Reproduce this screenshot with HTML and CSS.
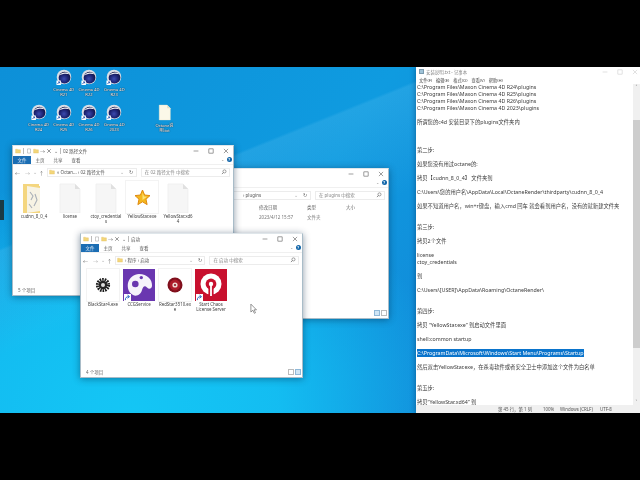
FILE: index.html
```html
<!DOCTYPE html>
<html lang="zh-CN">
<head>
<meta charset="utf-8">
<title>桌面</title>
<link rel="stylesheet" href="styles.css">
</head>
<body>
<svg class="defs" width="0" height="0" aria-hidden="true">
  <defs>
    <radialGradient id="c4dball" cx="45%" cy="60%" r="60%">
      <stop offset="0" stop-color="#3c4bb0"/><stop offset=".6" stop-color="#1c2270"/><stop offset="1" stop-color="#12143f"/>
    </radialGradient>
    <symbol id="c4d" viewBox="0 0 18 18">
      <circle cx="9" cy="9" r="8.2" fill="#d9dde6"/>
      <circle cx="9.6" cy="9.8" r="6.6" fill="url(#c4dball)"/>
      <path d="M3.5 7.5C6 3.5 12 2.5 15.5 6 12 4.8 7 5 3.5 7.5Z" fill="#f4f6fa"/>
      <rect x="0.5" y="13" width="5" height="5" fill="#fff"/>
      <path d="M1.5 17 L4 14.5M2.5 14.5H4V16" stroke="#2050b0" stroke-width="1" fill="none"/>
    </symbol>
    <symbol id="page" viewBox="0 0 32 32">
      <path d="M6 3H21L26 8V32H6Z" fill="#f6f6f6" stroke="#ececec" stroke-width=".7"/>
      <path d="M21 3V8H26Z" fill="#e0e0e0"/>
    </symbol>
    <symbol id="deskdoc" viewBox="0 0 32 32">
      <path d="M6 2H21L27 8V30H6Z" fill="#fbf8e8" stroke="#e8e4cc" stroke-width=".7"/>
      <path d="M21 2V8H27Z" fill="#e4e0c8"/>
    </symbol>
    <symbol id="folder-mini" viewBox="0 0 10 10">
      <path d="M1 2H4L5 3H9V8.5H1Z" fill="#f3d67a" stroke="#d9b14c" stroke-width=".5"/>
    </symbol>
    <symbol id="mini-page" viewBox="0 0 10 10">
      <path d="M2.5 1.5H7.5V8.5H2.5Z" fill="#fff" stroke="#888" stroke-width=".7"/>
    </symbol>
    <symbol id="mini-x" viewBox="0 0 10 10">
      <path d="M2 2L8 8M8 2L2 8" stroke="#555" stroke-width="1"/>
    </symbol>
    <symbol id="ctl-min" viewBox="0 0 10 10"><path d="M1 5H9" stroke="#333" stroke-width=".8"/></symbol>
    <symbol id="ctl-max" viewBox="0 0 10 10"><rect x="1.5" y="1.5" width="7" height="7" fill="none" stroke="#333" stroke-width=".8"/></symbol>
    <symbol id="ctl-close" viewBox="0 0 10 10"><path d="M1.5 1.5L8.5 8.5M8.5 1.5L1.5 8.5" stroke="#333" stroke-width=".8"/></symbol>
    <symbol id="search" viewBox="0 0 10 10">
      <circle cx="5.8" cy="4" r="2.6" fill="none" stroke="#555" stroke-width=".9"/><path d="M4 6L1.5 8.5" stroke="#555" stroke-width="1.1"/>
    </symbol>
    <symbol id="shortcut" viewBox="0 0 8 8">
      <rect width="8" height="8" fill="#fff"/><path d="M1.5 7C1.5 4 3 3 5.5 3M4 1.2L6.3 3L4 4.8" fill="none" stroke="#2060c0" stroke-width="1.1"/>
    </symbol>
  </defs>
</svg>

<main class="screen">
  <div class="edge-tab"></div>

  <div class="icon-grid">
    <a class="d-icon col-2"><svg class="d-glyph"><use href="#c4d"/></svg><span>Cinema 4D R21</span></a>
    <a class="d-icon"><svg class="d-glyph"><use href="#c4d"/></svg><span>Cinema 4D R22</span></a>
    <a class="d-icon"><svg class="d-glyph"><use href="#c4d"/></svg><span>Cinema 4D R23</span></a>
    <a class="d-icon col-1"><svg class="d-glyph"><use href="#c4d"/></svg><span>Cinema 4D R24</span></a>
    <a class="d-icon"><svg class="d-glyph"><use href="#c4d"/></svg><span>Cinema 4D R25</span></a>
    <a class="d-icon"><svg class="d-glyph"><use href="#c4d"/></svg><span>Cinema 4D R26</span></a>
    <a class="d-icon"><svg class="d-glyph"><use href="#c4d"/></svg><span>Cinema 4D 2023</span></a>
    <a class="d-icon col-6"><svg class="d-glyph doc"><use href="#deskdoc"/></svg><span>Octane说明.txt</span></a>
  </div>

  <!-- plugins window (back) -->
  <section class="win win-plugins">
    <header class="titlebar">
      <div class="qa"><svg class="mini"><use href="#folder-mini"/></svg></div>
      <div class="ctls"><svg class="ctl"><use href="#ctl-min"/></svg><svg class="ctl"><use href="#ctl-max"/></svg><svg class="ctl"><use href="#ctl-close"/></svg></div>
    </header>
    <nav class="ribbon"><span class="tab-file">文件</span><span class="grow"></span><span class="chev">⌄</span><span class="help">?</span></nav>
    <div class="addr">
      <span class="nav back">←</span><span class="nav dim">→</span><span class="nav dim">⌄</span><span class="nav">↑</span>
      <div class="path"><span class="grow">› plugins</span><span class="nav dim">⌄</span><span class="nav">↻</span></div>
      <div class="find"><span class="grow">在 plugins 中搜索</span><svg class="mini"><use href="#search"/></svg></div>
    </div>
    <div class="details">
      <div class="d-row d-head"><span class="c1">修改日期</span><span class="c2">类型</span><span class="c3">大小</span></div>
      <div class="d-row"><span class="c1">2023/4/12 15:57</span><span class="c2">文件夹</span></div>
    </div>
    <footer class="status"><span class="grow"></span><span class="view on"></span><span class="view"></span></footer>
  </section>

  <!-- 02 路径文件 window -->
  <section class="win win-path">
    <header class="titlebar">
      <div class="qa">
        <svg class="mini"><use href="#folder-mini"/></svg><i class="sep"></i>
        <svg class="mini"><use href="#mini-page"/></svg><svg class="mini"><use href="#folder-mini"/></svg><span class="qa-t">→</span><svg class="mini"><use href="#mini-x"/></svg><span class="qa-t">⌄</span><i class="sep"></i>
        <span class="title">02 路径文件</span>
      </div>
      <div class="ctls"><svg class="ctl"><use href="#ctl-min"/></svg><svg class="ctl"><use href="#ctl-max"/></svg><svg class="ctl"><use href="#ctl-close"/></svg></div>
    </header>
    <nav class="ribbon"><span class="tab-file">文件</span><span class="tab">主页</span><span class="tab">共享</span><span class="tab">查看</span><span class="grow"></span><span class="chev">⌄</span><span class="help">?</span></nav>
    <div class="addr">
      <span class="nav back">←</span><span class="nav dim">→</span><span class="nav dim">⌄</span><span class="nav">↑</span>
      <div class="path"><svg class="mini"><use href="#folder-mini"/></svg><span class="grow">« Octan... › 02 路径文件</span><span class="nav dim">⌄</span><span class="nav">↻</span></div>
      <div class="find"><span class="grow">在 02 路径文件 中搜索</span><svg class="mini"><use href="#search"/></svg></div>
    </div>
    <div class="tiles">
      <figure class="tile">
        <svg class="art" viewBox="0 0 32 32">
          <path d="M5 3H21V5H22V32H5Z" fill="#f4d67f"/>
          <path d="M9 5L22 7V30L9 32Z" fill="#f7f3e4"/>
          <path d="M12 11L15 15L13 19M17 13L19 19L16 25M11 23L14 27" stroke="#aab0b8" stroke-width="1.1" fill="none"/>
        </svg>
        <figcaption>cudnn_8_0_4</figcaption>
      </figure>
      <figure class="tile"><svg class="art"><use href="#page"/></svg><figcaption>license</figcaption></figure>
      <figure class="tile"><svg class="art"><use href="#page"/></svg><figcaption>ctoy_credential<br>s</figcaption></figure>
      <figure class="tile boxed">
        <svg class="art" viewBox="0 0 32 32">
          <path d="M16.5 9L18.6 14L24 14.6L20 18.2L21.1 23.6L16.5 20.8L11.9 23.6L13 18.2L9 14.6L14.4 14Z" fill="#f4b81e" stroke="#e08a10" stroke-width="1"/>
          <path d="M16.5 11.5L18 15.5L21 15.8L16.5 19Z" fill="#fde27a"/>
        </svg>
        <figcaption>YellowStar.exe</figcaption>
      </figure>
      <figure class="tile"><svg class="art"><use href="#page"/></svg><figcaption>YellowStar.xd6<br>4</figcaption></figure>
    </div>
    <footer class="status"><span class="grow">5 个项目</span></footer>
  </section>

  <!-- 启动 window (front) -->
  <section class="win win-start">
    <header class="titlebar">
      <div class="qa">
        <svg class="mini"><use href="#folder-mini"/></svg><i class="sep"></i>
        <svg class="mini"><use href="#mini-page"/></svg><svg class="mini"><use href="#folder-mini"/></svg><span class="qa-t">→</span><svg class="mini"><use href="#mini-x"/></svg><span class="qa-t">⌄</span><i class="sep"></i>
        <span class="title">启动</span>
      </div>
      <div class="ctls"><svg class="ctl"><use href="#ctl-min"/></svg><svg class="ctl"><use href="#ctl-max"/></svg><svg class="ctl"><use href="#ctl-close"/></svg></div>
    </header>
    <nav class="ribbon"><span class="tab-file">文件</span><span class="tab">主页</span><span class="tab">共享</span><span class="tab">查看</span><span class="grow"></span><span class="chev">⌄</span><span class="help">?</span></nav>
    <div class="addr">
      <span class="nav back">←</span><span class="nav dim">→</span><span class="nav dim">⌄</span><span class="nav">↑</span>
      <div class="path"><svg class="mini"><use href="#folder-mini"/></svg><span class="grow">› 程序 › 启动</span><span class="nav dim">⌄</span><span class="nav">↻</span></div>
      <div class="find"><span class="grow">在 启动 中搜索</span><svg class="mini"><use href="#search"/></svg></div>
    </div>
    <div class="tiles">
      <figure class="tile boxed">
        <svg class="art" viewBox="0 0 32 32">
          <circle cx="16" cy="16" r="5.4" fill="none" stroke="#1b1b1b" stroke-width="3.4" stroke-dasharray="1.5 .9"/>
          <circle cx="16" cy="16" r="4.2" fill="#222"/>
          <circle cx="16" cy="16" r="2" fill="#ddd"/>
        </svg>
        <figcaption>BlackStar4.exe</figcaption>
      </figure>
      <figure class="tile">
        <svg class="art" viewBox="0 0 32 32">
          <rect width="32" height="32" fill="#6a37b0"/>
          <path d="M16 5C24.5 5 29.5 11 29 17C28.5 20 26 20.5 24 18.5C21.5 16 20 18 19 21C18 25 14 28 10 26C6 24 4 19 5 14C6.5 8.5 11 5 16 5Z" fill="#f6f3fb"/>
          <circle cx="12.3" cy="15" r="3.3" fill="#6a37b0"/>
          <circle cx="18.3" cy="8.6" r="1.7" fill="#6a37b0"/>
        </svg>
        <svg class="lnk"><use href="#shortcut"/></svg>
        <figcaption>CCGService</figcaption>
      </figure>
      <figure class="tile boxed">
        <svg class="art" viewBox="0 0 32 32">
          <circle cx="16" cy="16" r="7.5" fill="#7f0f1c"/>
          <circle cx="16" cy="16" r="5.4" fill="#ad1c2a"/>
          <circle cx="16" cy="16" r="2.6" fill="#efd9d2"/>
          <circle cx="16" cy="16" r="1.1" fill="#8f1420"/>
        </svg>
        <figcaption>RedStar3510.ex<br>e</figcaption>
      </figure>
      <figure class="tile">
        <svg class="art" viewBox="0 0 32 32">
          <rect width="32" height="32" fill="#c8102e"/>
          <circle cx="16" cy="15" r="10.5" fill="#fff"/>
          <circle cx="16" cy="15" r="5.4" fill="#c8102e"/>
          <rect x="13.4" y="19" width="5.2" height="8" fill="#c8102e"/>
          <circle cx="16" cy="15" r="2.2" fill="#fff"/>
          <rect x="15.1" y="16" width="1.8" height="11" fill="#fff"/>
        </svg>
        <svg class="lnk"><use href="#shortcut"/></svg>
        <figcaption>Start Chaos License Server</figcaption>
      </figure>
    </div>
    <footer class="status"><span class="grow">4 个项目</span><span class="view"></span><span class="view on"></span></footer>
  </section>

  <svg class="pointer" viewBox="0 0 8 12"><path d="M1 1V10L3.2 8L5 11.5L6.3 10.8L4.6 7.5H7.4Z" fill="#fff" stroke="#555" stroke-width=".7"/></svg>

  <!-- Notepad -->
  <section class="notepad">
    <header class="np-title">
      <span class="np-ico"></span><span class="np-name">安装说明.txt - 记事本</span><span class="grow"></span>
      <div class="ctls np-ctls"><svg class="ctl"><use href="#ctl-min"/></svg><svg class="ctl"><use href="#ctl-max"/></svg><svg class="ctl"><use href="#ctl-close"/></svg></div>
    </header>
    <nav class="np-menu"><span>文件(F)</span><span>编辑(E)</span><span>格式(O)</span><span>查看(V)</span><span>帮助(H)</span></nav>
    <div class="np-body">
<pre class="np-text">C:\Program Files\Maxon Cinema 4D R24\plugins
C:\Program Files\Maxon Cinema 4D R25\plugins
C:\Program Files\Maxon Cinema 4D R26\plugins
C:\Program Files\Maxon Cinema 4D 2023\plugins

所谓您的c4d 安装目录下的plugins文件夹内



第二步:

如果您没有用过octane的:

拷贝【cudnn_8_0_4】 文件夹到

C:\Users\您的用户名\AppData\Local\OctaneRender\thirdparty\cudnn_8_0_4

如果不知道用户名，win+r键盘，输入cmd 回车 就会看到用户名，没有的就新建文件夹


第三步:

拷贝2个文件

license
ctoy_credentials

到

C:\Users\[USER]\AppData\Roaming\OctaneRender\


第四步:

拷贝 “YellowStar.exe” 到启动文件里面

shell:common startup

<mark class="sel">C:\ProgramData\Microsoft\Windows\Start Menu\Programs\Startup</mark>

然后双击YellowStar.exe，在杀毒软件或者安全卫士中添加这个文件为白名单


第五步:

拷贝“YellowStar.xd64” 到</pre>
      <div class="scroll"><span class="sb-arrow">˄</span><div class="sb-gap"></div><div class="sb-thumb"></div><div class="sb-fill"></div><span class="sb-arrow">˅</span></div>
    </div>
    <footer class="np-status"><span class="s1">第 45 行，第 1 列</span><span class="s2">100%</span><span class="s3">Windows (CRLF)</span><span class="s4">UTF-8</span></footer>
  </section>
</main>
</body>
</html>
```
FILE: styles.css
```css
* { box-sizing: border-box; }
html, body { margin: 0; padding: 0; height: 100%; background: #000; overflow: hidden; }
body { padding-top: 67px; font-family: "Noto Sans", "Noto Sans CJK SC", sans-serif; }
.defs { position: absolute; }
.grow { flex: 1; min-width: 0; }

.screen {
  position: relative;
  width: 640px;
  height: 346px;
  overflow: hidden;
  filter: blur(.45px);
  background:
    linear-gradient(158deg, rgba(255,255,255,0) 30%, rgba(120,205,245,.18) 30.5%, rgba(255,255,255,0) 48%),
    radial-gradient(ellipse 330px 240px at 130px 345px, #14c6f5 0%, rgba(20,196,245,.85) 45%, rgba(20,190,245,0) 100%),
    linear-gradient(125deg, #0d90d8 0%, #0f9be0 45%, #1288d8 75%, #117fcf 100%);
}
.edge-tab { position: absolute; left: 0; top: 133px; width: 4px; height: 20px; background: #1b3a45; }

/* desktop icons */
.icon-grid {
  position: absolute; left: 26px; top: 2px;
  display: grid;
  grid-template-columns: repeat(6, 25.2px);
  grid-auto-rows: 35px;
}
.d-icon { display: flex; flex-direction: column; align-items: center; color: #fff; text-align: center; min-width: 0; }
.d-icon span { font-size: 4.1px; line-height: 5.2px; width: 22px; margin-top: 2px; word-break: break-all; text-shadow: 0 0 1px #123, 0 0 1px #123; }
.d-glyph { width: 16px; height: 16px; flex: none; }
.d-glyph.doc { width: 17px; height: 17px; }
.col-1 { grid-column: 1; } .col-2 { grid-column: 2; } .col-6 { grid-column: 6; }

/* explorer windows */
.win {
  position: absolute;
  width: 222px;
  display: flex; flex-direction: column;
  background: #fff;
  border: 1px solid #a9bcc8;
  border-top-color: #dfe6ea;
  box-shadow: 0 1px 7px rgba(0,30,60,.45);
  color: #444;
  font-size: 4.5px;
}
.win-plugins { left: 167px; top: 101px; height: 151px; }
.win-path { left: 12px; top: 78px; height: 151px; }
.win-start { left: 80px; top: 166px; width: 223px; height: 145px; }

.titlebar { height: 9px; flex: none; display: flex; align-items: center; padding-left: 2px; }
.qa { flex: 1; display: flex; align-items: center; gap: 1px; min-width: 0; }
.qa-t { font-size: 5px; color: #666; width: 5px; text-align: center; }
.mini { width: 6px; height: 6px; flex: none; }
.sep { width: 1px; height: 6px; background: #bbb; margin: 0 1px; }
.title { color: #555; white-space: nowrap; }
.ctls { display: flex; gap: 9px; padding-right: 4px; }
.ctl { width: 6px; height: 6px; }

.ribbon { height: 9px; flex: none; display: flex; align-items: center; }
.tab-file { width: 18px; height: 8px; line-height: 8px; background: #1b6db3; color: #dfeaf5; text-align: center; }
.tab { width: 18px; text-align: center; color: #555; }
.chev { color: #888; margin-right: 3px; font-size: 4px; }
.help { width: 5.5px; height: 5.5px; border-radius: 50%; background: #0f64a8; color: #fff; font-size: 4px; line-height: 5.5px; text-align: center; margin-right: 1px; font-weight: 700; }

.addr { height: 15px; flex: none; display: flex; align-items: center; padding: 2px 3px 2px 1px; border-top: 1px solid #f0f0f0; }
.nav { width: 7px; text-align: center; color: #666; font-size: 5px; flex: none; }
.nav.back { margin-right: 3px; }
.nav.dim { color: #aaa; }
.path { flex: 92 1 0; height: 9px; display: flex; align-items: center; gap: 2px; padding: 0 1px; border: 1px solid #ececec; min-width: 0; white-space: nowrap; color: #555; margin-left: 2px; }
.win-plugins .path { padding-left: 40px; }
.find { flex: 88 1 0; height: 9px; display: flex; align-items: center; padding: 0 2px 0 3px; border: 1px solid #ececec; margin-left: 4px; min-width: 0; white-space: nowrap; color: #888; }

.tiles { flex: 1; display: flex; gap: 4px; padding: 2px 0 0 5px; min-height: 0; align-items: flex-start; }
.win-start .tiles { padding-left: 6px; }
.tile { margin: 0; width: 32px; flex: none; position: relative; text-align: center; }
.tile.boxed .art { outline: 1px solid #f3f3f3; }
.art { width: 32px; height: 32px; display: block; }
.tile figcaption { font-size: 4.4px; line-height: 5.4px; color: #444; margin: 1px -1px 0; overflow-wrap: anywhere; }
.lnk { position: absolute; left: 1px; top: 25px; width: 7px; height: 7px; }

.status { height: 10px; flex: none; display: flex; align-items: center; padding: 0 1px 0 5px; color: #666; gap: 1px; }
.view { width: 6px; height: 6px; border: 1px solid #bbb; }
.view.on { background: #cfe5f5; border-color: #8fb8d8; }

.details { flex: 1; color: #777; }
.d-row { position: relative; height: 10px; display: flex; align-items: center; padding-left: 91px; white-space: nowrap; }
.d-head { color: #666; }
.c1 { width: 48px; } .c2 { width: 39px; } .c3 { width: 20px; }

.pointer { position: absolute; left: 250px; top: 236px; width: 7px; height: 11px; }

/* notepad */
.notepad {
  position: absolute; left: 416px; top: 0; width: 224px; height: 346px;
  display: flex; flex-direction: column; background: #fff; color: #3a3a3a;
  box-shadow: -1px 0 5px rgba(0,30,60,.35);
  font-size: 5.3px;
}
.np-title { height: 9px; flex: none; display: flex; align-items: center; padding-left: 3px; gap: 2px; }
.np-ico { width: 5px; height: 5px; background: #9fc3d8; border: 1px solid #7a9aae; }
.np-name { font-size: 4.4px; color: #888; }
.np-ctls { gap: 9px; padding-right: 2px; opacity: .3; }
.np-menu { height: 8px; flex: none; display: flex; align-items: center; gap: 4px; padding-left: 3px; font-size: 4.2px; color: #444; white-space: nowrap; }
.np-body { flex: 1; min-height: 0; display: flex; overflow: hidden; }
.np-text {
  flex: 1; min-width: 0; margin: 0; padding: 0 0 0 1px; overflow: hidden;
  font-family: "Noto Sans", "Noto Sans CJK SC", sans-serif;
  font-size: 5.3px; line-height: 7px; white-space: pre;
}
.sel { background: #0a74cc; color: #fff; }
.scroll { width: 7px; flex: none; display: flex; flex-direction: column; background: #f0f0f0; }
.sb-arrow { height: 6px; flex: none; font-size: 5px; line-height: 6px; text-align: center; color: #666; }
.sb-gap { height: 30px; flex: none; }
.sb-thumb { height: 228px; flex: none; background: #cdcdcd; }
.sb-fill { flex: 1; }
.np-status { height: 8px; flex: none; display: flex; align-items: center; background: #f0f0f0; font-size: 4.4px; color: #555; white-space: nowrap; padding-left: 82px; }
.s1 { width: 45px; } .s2 { width: 17px; } .s3 { width: 40px; } .s4 { width: 20px; }
```
